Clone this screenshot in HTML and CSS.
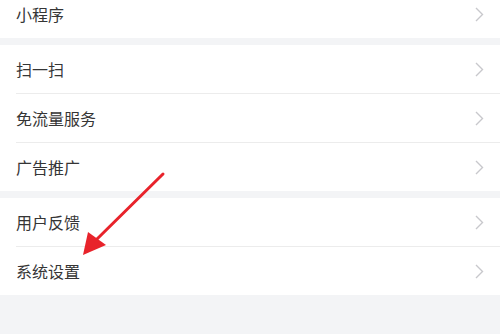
FILE: index.html
```html
<!DOCTYPE html>
<html lang="zh-CN">
<head>
  <meta charset="UTF-8">
  <meta name="viewport" content="width=device-width, initial-scale=1.0">
  <link rel="stylesheet" href="styles.css">
</head>

<body>
  <div class="page">
    <div class="group first">
      <div class="item"><span class="label">小程序</span><svg class="arrow" viewBox="0 0 9 15"><polyline points="1,1 7.5,7.5 1,14"/></svg></div>
    </div>
    <div class="group">
      <div class="item"><span class="label">扫一扫</span><svg class="arrow" viewBox="0 0 9 15"><polyline points="1,1 7.5,7.5 1,14"/></svg></div>
      <div class="item"><span class="label">免流量服务</span><svg class="arrow" viewBox="0 0 9 15"><polyline points="1,1 7.5,7.5 1,14"/></svg></div>
      <div class="item"><span class="label">广告推广</span><svg class="arrow" viewBox="0 0 9 15"><polyline points="1,1 7.5,7.5 1,14"/></svg></div>
    </div>
    <div class="group">
      <div class="item"><span class="label">用户反馈</span><svg class="arrow" viewBox="0 0 9 15"><polyline points="1,1 7.5,7.5 1,14"/></svg></div>
      <div class="item"><span class="label">系统设置</span><svg class="arrow" viewBox="0 0 9 15"><polyline points="1,1 7.5,7.5 1,14"/></svg></div>
    </div>

    <!-- red pointer drawn over the list -->
    <svg class="pointer" viewBox="0 0 500 334">
      <line x1="163" y1="174" x2="95" y2="241" />
      <polygon points="83,255 88,232 106,245" />
    </svg>
  </div>
</body>
</html>
```

FILE: styles.css
```css
body {
  margin: 0;
  background: #f3f4f6;
  font-family: "Noto Sans CJK SC", "Noto Sans", sans-serif;
}

.page {
  position: relative;
  width: 500px;
  height: 334px;
  overflow: hidden;
}

.group {
  background: #fff;
  margin-bottom: 7px;
}

.group.first {
  margin-top: -10px;
}

.item {
  display: flex;
  align-items: center;
  justify-content: space-between;
  height: 48px;
  margin-left: 16px;
  padding-right: 16px;
  border-bottom: 1px solid #ececec;
}

.item:last-child {
  border-bottom: none;
}

.label {
  font-size: 16px;
  color: #353535;
}

.arrow {
  width: 9px;
  height: 15px;
  fill: none;
  stroke: #c8c8cc;
  stroke-width: 1.4;
}

.pointer {
  position: absolute;
  left: 0;
  top: 0;
  width: 500px;
  height: 334px;
}

.pointer line {
  stroke: #e8232b;
  stroke-width: 3;
  stroke-linecap: round;
}

.pointer polygon {
  fill: #e8232b;
}
```
